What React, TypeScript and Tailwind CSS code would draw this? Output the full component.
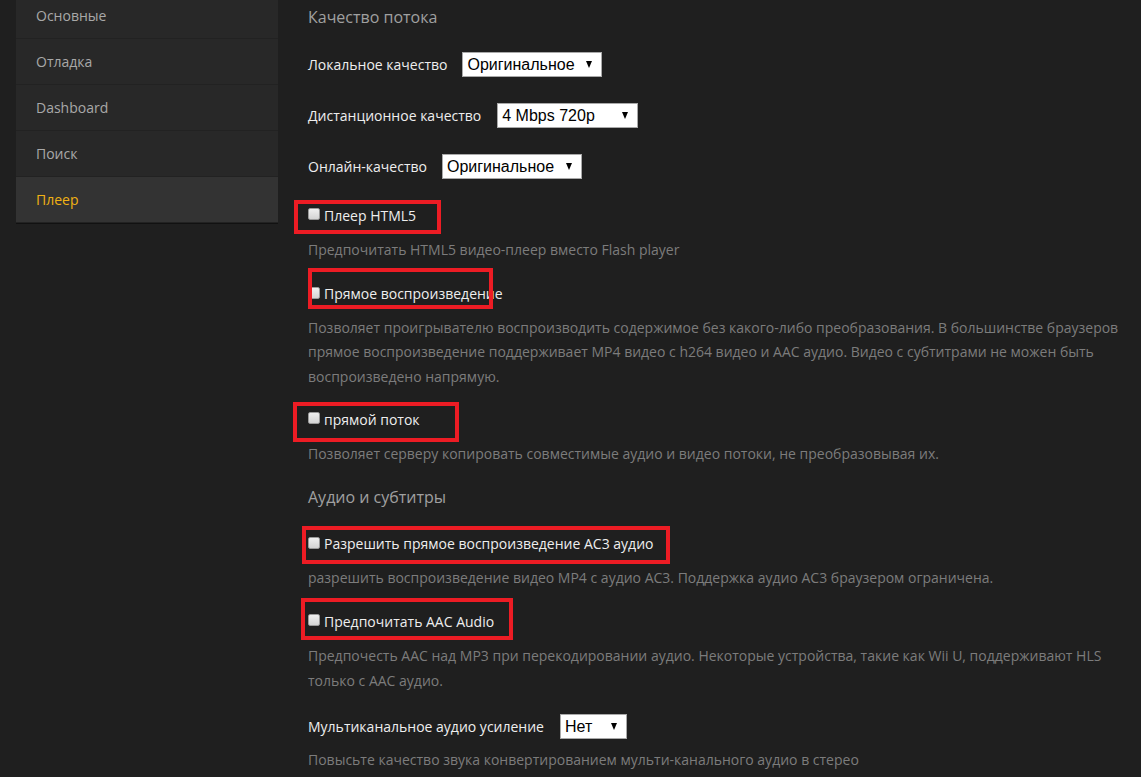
import React from "react";

const menu = ["Основные", "Отладка", "Dashboard", "Поиск", "Плеер"];

function Select({ value, width }: { value: string; width: string }) {
  return (
    <div
      className={`relative flex h-[25px] items-center border border-[#a9a9a9] bg-white pl-[4px] text-[16px] font-normal text-black ${width}`}
      style={{ fontFamily: '"Liberation Sans", Arial, sans-serif' }}
    >
      {value}
      <span className="absolute right-[9px] top-[8px] h-0 w-0 border-x-[3.5px] border-t-[7px] border-x-transparent border-t-black" />
    </div>
  );
}

function Checkbox({ label }: { label: string }) {
  return (
    <div className="flex h-[20px] items-center text-[14px] text-[#eeeeee]">
      <span className="mr-[4px] -mt-[2px] h-[12px] w-[12px] rounded-[2px] border border-[#9a9a9a] bg-gradient-to-b from-[#f0f0f0] to-[#d4d4d4]" />
      {label}
    </div>
  );
}

export default function App() {
  return (
    <div
      className="flex h-[777px] w-[1141px] overflow-hidden bg-[#1f1f1f]"
      style={{ fontFamily: '"Open Sans", "Noto Sans", sans-serif' }}
    >
      {/* sidebar */}
      <div className="ml-[16px] w-[262px] shrink-0">
        <ul className="-mt-[7px] shadow-[0_1px_0_#111]">
          {menu.map((item) => (
            <li
              key={item}
              className={`flex h-[46px] items-center border-b border-[#222] pl-[20px] text-[14px] ${
                item === "Плеер" ? "bg-[#333333] text-[#f0b214]" : "bg-[#282828] text-[#a8a8a8]"
              }`}
            >
              {item}
            </li>
          ))}
        </ul>
      </div>

      {/* settings */}
      <div className="relative ml-[30px] w-[820px] pt-[5px] text-[14px]">
        <h2 className="text-[16px] leading-[24px] text-[#a0a0a0]">Качество потока</h2>

        <div className="mt-[23px] flex items-center text-[#eeeeee]">
          <span className="mr-[15px]">Локальное качество</span>
          <Select value="Оригинальное" width="w-[140px]" />
        </div>
        <div className="mt-[26px] flex items-center text-[#eeeeee]">
          <span className="mr-[16px]">Дистанционное качество</span>
          <Select value="4 Mbps 720p" width="w-[141px]" />
        </div>
        <div className="mt-[26px] flex items-center text-[#eeeeee]">
          <span className="mr-[15px]">Онлайн-качество</span>
          <Select value="Оригинальное" width="w-[140px]" />
        </div>

        <div className="mt-[26px]">
          <Checkbox label="Плеер HTML5" />
        </div>
        <p className="mt-[13px] leading-[24.5px] text-[#7c7c7c]">
          Предпочитать HTML5 видео-плеер вместо Flash player
        </p>

        <div className="mt-[21px]">
          <Checkbox label="Прямое воспроизведение" />
        </div>
        <p className="mt-[12px] leading-[24.5px] text-[#7c7c7c]">
          Позволяет проигрывателю воспроизводить содержимое без какого-либо преобразования. В большинстве браузеров
          прямое воспроизведение поддерживает MP4 видео с h264 видео и AAC аудио. Видео с субтитрами не можен быть
          воспроизведено напрямую.
        </p>

        <div className="mt-[20px]">
          <Checkbox label="прямой поток" />
        </div>
        <p className="mt-[13px] leading-[24.5px] text-[#7c7c7c]">
          Позволяет серверу копировать совместимые аудио и видео потоки, не преобразовывая их.
        </p>

        <h2 className="mt-[18px] text-[16px] leading-[24px] text-[#a0a0a0]">Аудио и субтитры</h2>

        <div className="mt-[25px]">
          <Checkbox label="Разрешить прямое воспроизведение AC3 аудио" />
        </div>
        <p className="mt-[12px] leading-[24.5px] text-[#7c7c7c]">
          разрешить воспроизведение видео MP4 с аудио AC3. Поддержка аудио AC3 браузером ограничена.
        </p>

        <div className="mt-[21px]">
          <Checkbox label="Предпочитать AAC Audio" />
        </div>
        <p className="mt-[13px] leading-[24.5px] text-[#7c7c7c]">
          Предпочесть AAC над MP3 при перекодировании аудио. Некоторые устройства, такие как Wii U, поддерживают HLS
          только с AAC аудио.
        </p>

        <div className="mt-[21px] flex items-center text-[#eeeeee]">
          <span className="mr-[16px]">Мультиканальное аудио усиление</span>
          <Select value="Нет" width="w-[67px]" />
        </div>
        <p className="mt-[9px] leading-[24.5px] text-[#7c7c7c]">
          Повысьте качество звука конвертированием мульти-канального аудио в стерео
        </p>

        {/* red annotation frames */}
        <div className="absolute left-[-14px] top-[200px] h-[34px] w-[147px] border-[4px] border-[#ed1c24]" />
        <div className="absolute left-[0px] top-[268px] h-[41px] w-[185px] border-[4px] border-[#ed1c24]" />
        <div className="absolute left-[-15px] top-[402px] h-[40px] w-[166px] border-[4px] border-[#ed1c24]" />
        <div className="absolute left-[-6px] top-[526px] h-[38px] w-[368px] border-[4px] border-[#ed1c24]" />
        <div className="absolute left-[-7px] top-[598px] h-[42px] w-[212px] border-[4px] border-[#ed1c24]" />
      </div>
    </div>
  );
}
